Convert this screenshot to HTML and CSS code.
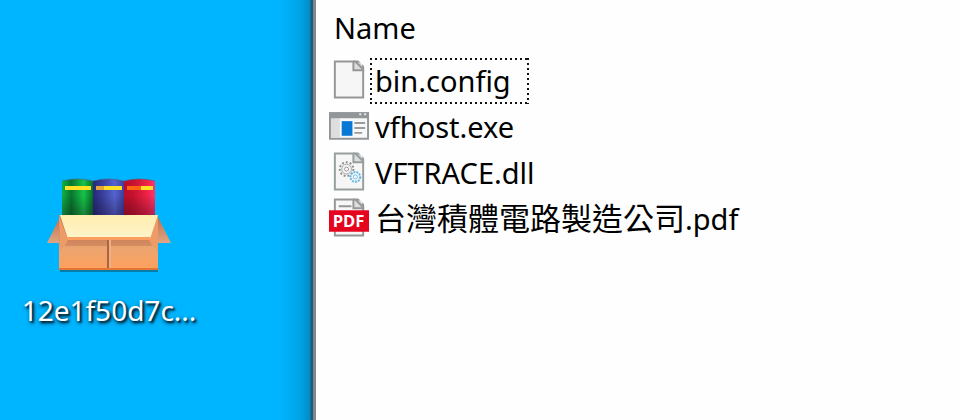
FILE: index.html
```
<!DOCTYPE html>
<html lang="en">
<head>
<meta charset="utf-8">
<title>Files</title>
<link rel="stylesheet" href="styles.css">
</head>
<body>
<main class="screen">
  <section class="desktop">
    <a class="shortcut" href="#archive">
      <svg class="archive-icon" viewBox="0 0 124 98" aria-hidden="true">
        <defs>
          <linearGradient id="green"><stop offset="0" stop-color="#10b247"/><stop offset=".3" stop-color="#08752d"/><stop offset=".7" stop-color="#18c34a"/><stop offset="1" stop-color="#067026"/></linearGradient>
          <linearGradient id="blue"><stop offset="0" stop-color="#26287c"/><stop offset=".35" stop-color="#3b439f"/><stop offset=".7" stop-color="#5563d0"/><stop offset="1" stop-color="#3a3f9a"/></linearGradient>
          <linearGradient id="red"><stop offset="0" stop-color="#b80d2b"/><stop offset=".3" stop-color="#c5132f"/><stop offset=".75" stop-color="#ef2347"/><stop offset="1" stop-color="#ff356c"/></linearGradient>
          <linearGradient id="shade" x2="0" y2="1"><stop offset=".4" stop-color="#000" stop-opacity="0"/><stop offset="1" stop-color="#200020" stop-opacity=".35"/></linearGradient>
          <linearGradient id="box" x2="0" y2="1"><stop offset=".35" stop-color="#cf8058"/><stop offset=".6" stop-color="#eba570"/><stop offset="1" stop-color="#ffa05c"/></linearGradient>
          <linearGradient id="cream" x2="0" y2="1"><stop offset="0" stop-color="#ffeeb0"/><stop offset="1" stop-color="#fff4cb"/></linearGradient>
          <linearGradient id="side" x2="0" y2="1"><stop offset="0" stop-color="#bd714f"/><stop offset="1" stop-color="#dfa582"/></linearGradient>
        </defs>
        <path d="M13 92h98v2H13z" fill="#087da9"/>
        <path d="M15 3q15-4 31 0v36H15z" fill="url(#green)"/>
        <path d="M46 3q15-4 31 0v36H46z" fill="url(#blue)"/>
        <path d="M77 3q15-4 31 0v36H77z" fill="url(#red)"/>
        <path d="M15 3h93v36H15z" fill="url(#shade)"/>
        <path d="M15 3q15-4 31 0M46 3q15-4 31 0M77 3q15-4 31 0" fill="none" stroke="#555b79" stroke-opacity=".6"/>
        <path d="M18 8h26v4H18zM54 8h21v4H54zM94 8h12v4H94z" fill="#ffe125"/>
        <path d="M49 8h8v4h-8z" fill="#e9a43c"/>
        <path d="M80 8h14v4H80z" fill="#ff6414"/>
        <path d="M13 39 0 65h13zM111 39l13 26h-13z" fill="url(#side)"/>
        <path d="M12 37h99v55H12z" fill="url(#box)"/>
        <path d="M12 38 21 62l-8 12zM111 38l-9 24 9 12z" fill="#ee9b66"/>
        <path d="M21 62h81l3 6H18z" fill="#bd7453" opacity=".4"/>
        <path d="M13 37h98l-8 24H21z" fill="url(#cream)"/>
        <path d="M20 59h84l-1 3H21z" fill="#f9a061"/>
        <path d="M60 62h2v29h-2z" fill="#ad6247"/>
        <path d="M62 62h2v29h-2z" fill="#efb080"/>
        <path d="M12 90h99v2H12z" fill="#e27435"/>
      </svg>
      <span class="shortcut-label">12e1f50d7c...</span>
    </a>
  </section>
  <section class="explorer">
    <table class="files">
      <thead><tr><th scope="col">Name</th></tr></thead>
      <tbody>
        <tr><td><div class="file">
          <svg class="file-icon" viewBox="0 0 42 44" aria-hidden="true">
            <path d="M6 2h20l9 9v28H6z" fill="#f6f6f6" stroke="#969696" stroke-width="2"/>
            <path d="M25 2h10v9H25z" fill="#ddd"/>
            <path d="M25 2v9h10V2H25" fill="none" stroke="#969696" stroke-width="2"/>
            <path d="m29 0 8 8V0z" fill="#fefefe"/>
            <path d="m27 2 8 8" stroke="#969696" stroke-width="2"/>
          </svg>
          <span class="file-name focused">bin.config</span>
        </div></td></tr>
        <tr><td><div class="file">
          <svg class="file-icon" viewBox="0 0 42 44" aria-hidden="true">
            <path d="M1 8h39v26H1z" fill="#f8f8f8" stroke="#929699" stroke-width="2"/>
            <path d="M2 12h9v21H2z" fill="#dedede"/>
            <path d="M0 7h41v6H0z" fill="#929699"/>
            <path d="M31 8h2v2h-2zM36 8h2v2h-2z" fill="#e7e7e7"/>
            <path d="M13 16h11v15H13z" fill="#0878d7"/>
            <path d="M26 18h11M26 23h11M26 28h8" stroke="#9b9b9b" stroke-width="2"/>
          </svg>
          <span class="file-name">vfhost.exe</span>
        </div></td></tr>
        <tr><td><div class="file">
          <svg class="file-icon" viewBox="0 0 42 44" aria-hidden="true">
            <path d="M6 2h20l9 9v28H6z" fill="#f6f6f6" stroke="#969e9e" stroke-width="2"/>
            <path d="M25 2h10v9H25z" fill="#ddd"/>
            <path d="M25 2v9h10V2H25" fill="none" stroke="#969e9e" stroke-width="2"/>
            <path d="m29 0 8 8V0z" fill="#fefefe"/>
            <path d="m27 2 8 8" stroke="#969e9e" stroke-width="2"/>
            <circle cx="18" cy="18" r="7" fill="#f2f2f2" stroke="#8d8d8d" stroke-width="2" stroke-dasharray="2 2"/>
            <circle cx="18" cy="18" r="5" fill="none" stroke="#aaa"/>
            <circle cx="18" cy="18" r="2" fill="#fff" stroke="#999"/>
            <circle cx="27" cy="26" r="5" fill="#e6f5fc" stroke="#69b5de" stroke-width="2" stroke-dasharray="2 1"/>
            <circle cx="27" cy="26" r="2" fill="#fff" stroke="#7dbbe0"/>
          </svg>
          <span class="file-name">VFTRACE.dll</span>
        </div></td></tr>
        <tr><td><div class="file">
          <svg class="file-icon" viewBox="0 0 42 44" aria-hidden="true">
            <path d="M6 2h20l9 9v28H6z" fill="#f7f7f7" stroke="#969696" stroke-width="2"/>
            <path d="M25 2h10v9H25z" fill="#ddd"/>
            <path d="M25 2v9h10V2H25M10 9h13" fill="none" stroke="#969696" stroke-width="2"/>
            <path d="m29 0 8 8V0z" fill="#fefefe"/>
            <path d="m27 2 8 8" stroke="#969696" stroke-width="2"/>
            <path d="M0 13h41v22H0z" fill="#e5051f"/>
            <text class="pdf-mark" x="20" y="30" text-anchor="middle">PDF</text>
          </svg>
          <span class="file-name"><span class="cjk" lang="zh-Hant">台灣積體電路製造公司</span>.pdf</span>
        </div></td></tr>
      </tbody>
    </table>
  </section>
</main>
</body>
</html>
```
FILE: styles.css
```
* {
  box-sizing: border-box;
}

body {
  margin: 0;
  font-family: "Noto Sans", "Noto Sans CJK TC", sans-serif;
  font-size: 29px;
  line-height: 46px;
  color: #000;
  background: #fff;
}

.screen {
  display: flex;
  min-height: 100vh;
}

.desktop {
  flex: 0 0 313px;
  padding: 178px 0 0 12px;
  background: linear-gradient(to left, #155f7c 0, #155f7c 2px, #078ac3 3px, #00a2e5 12px, #00b4fd 32px, #00b5ff 40px);
}

.shortcut {
  display: flex;
  flex-direction: column;
  align-items: center;
  width: 194px;
  gap: 11px;
  color: #fff;
  text-decoration: none;
}

.archive-icon {
  display: block;
  width: 124px;
  height: 98px;
}

.shortcut-label {
  font-size: 28px;
  text-shadow: 2px 2px 2px #002b40, 1px 2px 4px #002b40;
}

.explorer {
  flex: 1;
  padding: 5px 0 0 13px;
  border-left: 3px solid #85858f;
  background: #fefefe;
}

.files {
  border-collapse: collapse;
}

.files th {
  padding: 0 0 7px 5px;
  font-weight: 400;
  text-align: left;
}

.files td {
  padding: 0;
}

.file {
  display: flex;
  align-items: center;
  height: 46px;
}

.file-icon {
  flex: none;
  width: 41px;
  height: 44px;
}

.file-name {
  padding: 0 18px 0 5px;
  white-space: nowrap;
}

.focused {
  background:
    repeating-linear-gradient(to right, #111 0 2px, transparent 2px 5px) top / 100% 2px no-repeat,
    repeating-linear-gradient(to right, #111 0 2px, transparent 2px 5px) bottom / 100% 2px no-repeat,
    repeating-linear-gradient(to bottom, #111 0 2px, transparent 2px 5px) left / 2px 100% no-repeat,
    repeating-linear-gradient(to bottom, #111 0 2px, transparent 2px 5px) right / 2px 100% no-repeat;
}

.cjk {
  font-family: "Noto Sans CJK TC", sans-serif;
  font-size: 31px;
  line-height: 1;
}

.pdf-mark {
  font-family: "Open Sans", sans-serif;
  font-size: 17px;
  font-weight: 700;
  fill: #fff;
}
```
